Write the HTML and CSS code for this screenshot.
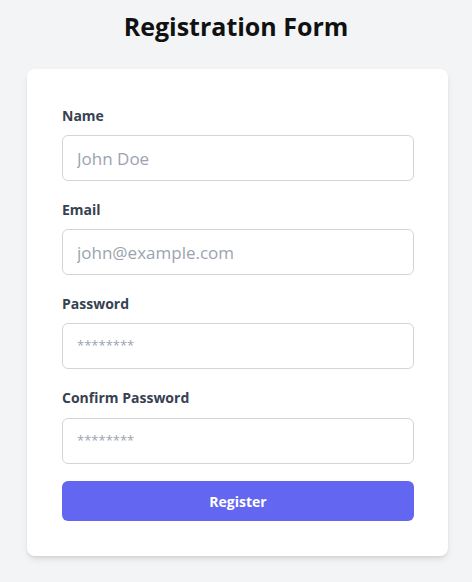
FILE: index.html
```html
<!DOCTYPE html>
<html lang="en">
<head>
<meta charset="utf-8">
<title>Registration Form</title>
<link rel="stylesheet" href="styles.css">
</head>
<body>
<h1 class="title">Registration Form</h1>
<form class="card">
  <div class="field">
    <label class="label" for="name">Name</label>
    <input class="input" id="name" type="text" placeholder="John Doe">
  </div>
  <div class="field">
    <label class="label" for="email">Email</label>
    <input class="input" id="email" type="email" placeholder="john@example.com">
  </div>
  <div class="field">
    <label class="label" for="pw">Password</label>
    <input class="input secret" id="pw" type="text" placeholder="********">
  </div>
  <div class="field wide">
    <label class="label" for="pw2">Confirm Password</label>
    <input class="input secret" id="pw2" type="text" placeholder="********">
  </div>
  <button class="button" type="button">Register</button>
</form>
</body>
</html>
```
FILE: styles.css
```css
* { box-sizing: border-box; }
html, body { margin: 0; padding: 0; }
body {
  background: #f3f4f6;
  font-family: "Open Sans", "Noto Sans", sans-serif;
  width: 472px;
  height: 582px;
  overflow: hidden;
}
.title {
  margin: 0;
  padding-top: 9px;
  height: 69px;
  text-align: center;
  font-size: 25px;
  line-height: 34px;
  font-weight: 700;
  color: #111111;
}
.card {
  margin-left: 27px;
  width: 421px;
  background: #ffffff;
  border-radius: 8px;
  box-shadow: 0 4px 6px -1px rgba(0,0,0,0.1), 0 2px 4px -2px rgba(0,0,0,0.1);
  padding: 37px 34px 35px 35px;
  display: flex;
  flex-direction: column;
}
.field {
  display: flex;
  flex-direction: column;
  gap: 9px;
  margin-bottom: 19px;
}
.field.wide { gap: 10px; margin-bottom: 17px; }
.label {
  font-size: 14px;
  line-height: 20px;
  font-weight: 700;
  color: #374151;
}
.input {
  height: 46px;
  width: 100%;
  border: 1px solid #d1d5db;
  border-radius: 6px;
  padding: 0 14px;
  font-family: inherit;
  font-size: 17px;
  color: #111827;
  background: #fff;
  outline: none;
}
.input.secret { font-size: 13px; padding-bottom: 3px; }
.input::placeholder { color: #9ca3af; }
.button {
  height: 40px;
  width: 100%;
  border: none;
  border-radius: 6px;
  background: #6366f1;
  color: #ffffff;
  font-family: inherit;
  font-size: 14px;
  font-weight: 700;
}
```
